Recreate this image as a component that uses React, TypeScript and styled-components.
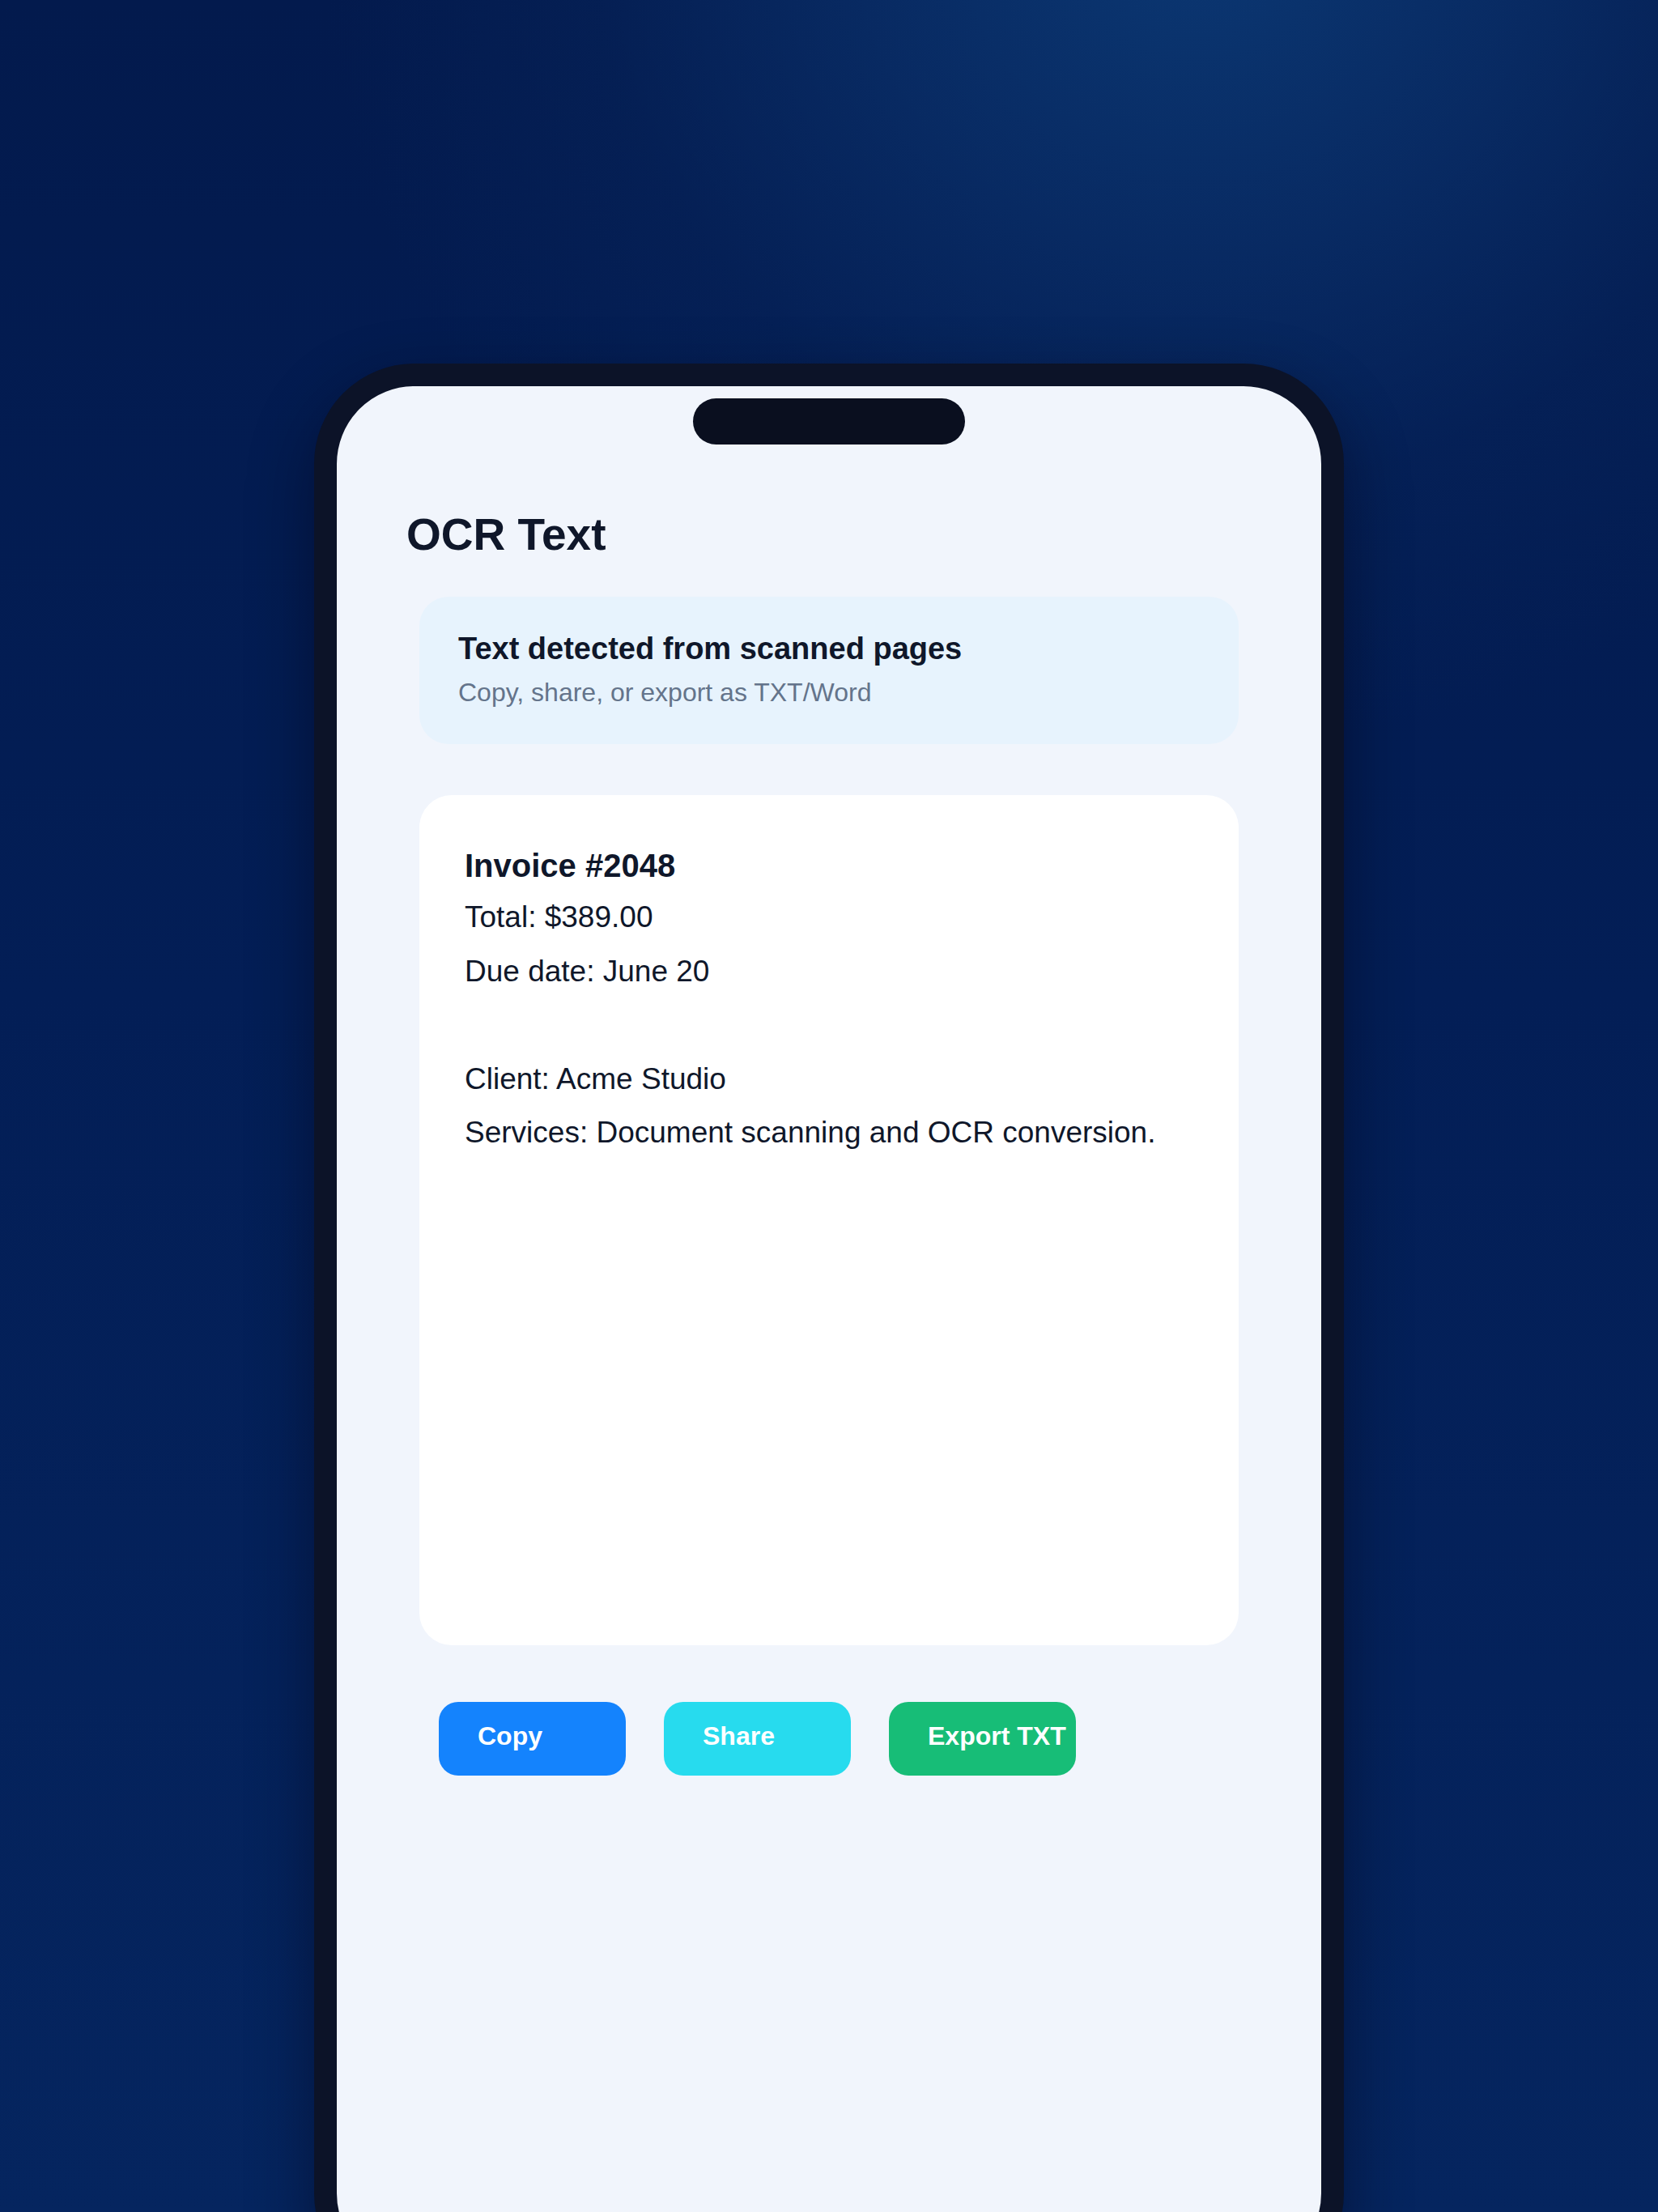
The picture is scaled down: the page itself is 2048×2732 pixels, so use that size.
import React from "react";
import styled, { createGlobalStyle } from "styled-components";

const GlobalStyle = createGlobalStyle`
  html, body {
    margin: 0;
    padding: 0;
  }
  body {
    font-family: "Liberation Sans", Arial, Helvetica, sans-serif;
    -webkit-font-smoothing: antialiased;
  }
  * { box-sizing: border-box; }
`;

const Page = styled.div`
  width: 2048px;
  height: 2732px;
  overflow: hidden;
  display: flex;
  justify-content: center;
  align-items: flex-start;
  padding-top: 449px;
  background:
    radial-gradient(ellipse 1350px 1250px at 1480px -80px, rgba(11, 55, 114, 1) 0%, rgba(10, 48, 106, 0.75) 30%, rgba(8, 40, 96, 0.35) 55%, rgba(6, 34, 88, 0) 80%),
    linear-gradient(180deg, #031a4d 0%, #031e56 45%, #05255f 100%);
`;

const Phone = styled.div`
  width: 1272px;
  height: 2384px;
  flex-shrink: 0;
  border: 28px solid #0c1328;
  border-radius: 124px;
  background: #f1f5fc;
  box-shadow: 0 30px 80px rgba(0, 4, 20, 0.45);
  display: flex;
  flex-direction: column;
  overflow: hidden;
`;

const Notch = styled.div`
  width: 336px;
  height: 57px;
  border-radius: 29px;
  background: #0a0f1f;
  margin: 15px auto 0;
  flex-shrink: 0;
`;

const Title = styled.h1`
  margin: 80px 0 0;
  padding: 0 86px;
  font-size: 55px;
  line-height: 62px;
  font-weight: 700;
  color: #0f172a;
`;

const Body = styled.div`
  padding: 0 102px;
  display: flex;
  flex-direction: column;
`;

const InfoCard = styled.section`
  margin-top: 46px;
  background: #e7f3fd;
  border-radius: 36px;
  padding: 43px 48px 45px;
  display: flex;
  flex-direction: column;
  gap: 15px;
`;

const InfoTitle = styled.div`
  font-size: 38px;
  line-height: 42px;
  font-weight: 700;
  color: #0f172a;
`;

const InfoSub = styled.div`
  font-size: 32px;
  line-height: 37px;
  color: #64748b;
`;

const TextCard = styled.article`
  margin-top: 63px;
  height: 1050px;
  background: #ffffff;
  border-radius: 40px;
  padding: 64px 56px;
  display: flex;
  flex-direction: column;
`;

const DocHeading = styled.div`
  font-size: 40px;
  line-height: 47px;
  font-weight: 700;
  color: #0f172a;
  margin-bottom: 7px;
`;

const DocLine = styled.p`
  margin: 0;
  font-size: 37px;
  line-height: 66.6px;
  color: #0f172a;
`;

const Blank = styled.div`
  height: 66.6px;
`;

const Actions = styled.div`
  margin-top: 70px;
  padding-left: 24px;
  display: flex;
  gap: 47px;
`;

const ActionButton = styled.button<{ $bg: string }>`
  width: 231px;
  height: 91px;
  border: none;
  border-radius: 24px;
  background: ${(p) => p.$bg};
  color: #ffffff;
  font-family: "Liberation Sans", Arial, Helvetica, sans-serif;
  font-size: 32px;
  font-weight: 700;
  padding: 0 0 6px 48px;
  display: flex;
  align-items: center;
  justify-content: flex-start;
  white-space: nowrap;
  cursor: pointer;
`;

const actions = [
  { label: "Copy", bg: "#1483fd" },
  { label: "Share", bg: "#27dbee" },
  { label: "Export TXT", bg: "#17bd77" },
];

export default function App() {
  return (
    <>
      <GlobalStyle />
      <Page>
        <Phone>
          <Notch />
          <Title>OCR Text</Title>
          <Body>
            <InfoCard>
              <InfoTitle>Text detected from scanned pages</InfoTitle>
              <InfoSub>Copy, share, or export as TXT/Word</InfoSub>
            </InfoCard>
            <TextCard>
              <DocHeading>Invoice #2048</DocHeading>
              <DocLine>Total: $389.00</DocLine>
              <DocLine>Due date: June 20</DocLine>
              <Blank />
              <DocLine>Client: Acme Studio</DocLine>
              <DocLine>Services: Document scanning and OCR conversion.</DocLine>
            </TextCard>
            <Actions>
              {actions.map((a) => (
                <ActionButton key={a.label} $bg={a.bg}>
                  {a.label}
                </ActionButton>
              ))}
            </Actions>
          </Body>
        </Phone>
      </Page>
    </>
  );
}
